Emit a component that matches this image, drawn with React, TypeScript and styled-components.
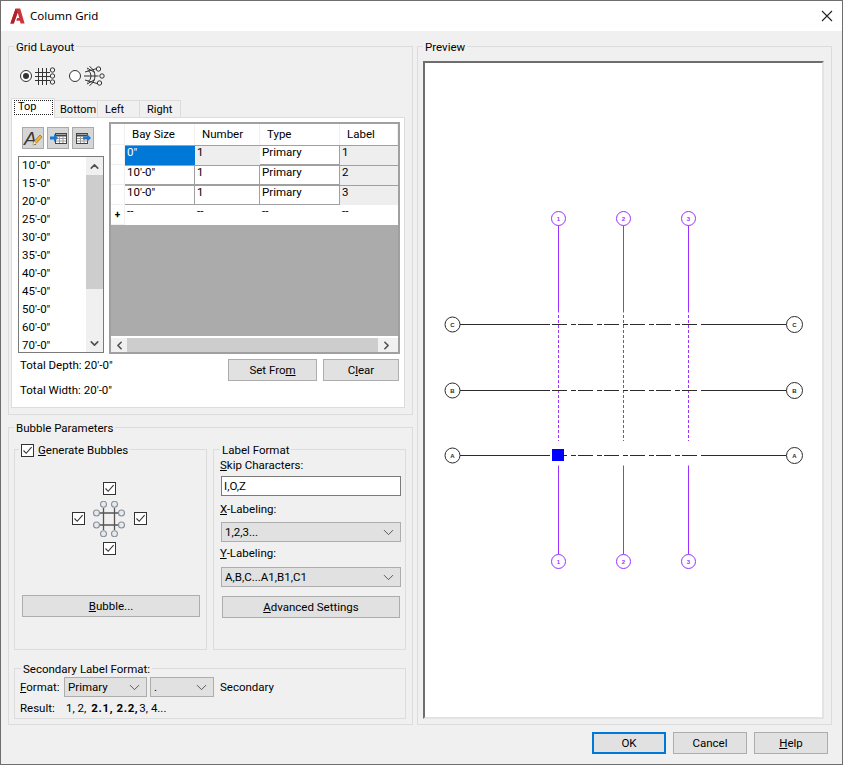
import * as React from 'react'
import styled, { createGlobalStyle } from 'styled-components'
import { ChevronDown, ChevronLeft, ChevronRight, ChevronUp } from 'lucide-react'

const GlobalStyle = createGlobalStyle`
  html, body {
    margin: 0;
    padding: 0;
    background: #f0f0f0;
  }
  * {
    box-sizing: border-box;
  }
`

const UI_FONT = `Roboto, "Liberation Sans", Arial, sans-serif`
const PURPLE = '#9b30ff'
const INK = '#2b2b2b'

const Window = styled.div`
  width: 843px;
  height: 765px;
  border: 1px solid #6e6e6e;
  background: #f0f0f0;
  color: #000;
  font-family: ${UI_FONT};
  font-size: 11.5px;
  line-height: 14px;
  overflow: hidden;
`

const TitleBar = styled.div`
  height: 30px;
  background: #fff;
  display: flex;
  align-items: center;
  padding: 0 9px 0 9px;
`

const TitleText = styled.span`
  font-family: "Noto Sans", sans-serif;
  font-size: 11.5px;
  margin-left: 5px;
  flex: 1;
`

const Body = styled.div`
  display: grid;
  grid-template-columns: 405px 415px;
  column-gap: 4px;
  padding: 15px 0 0 7px;
`

const Column = styled.div`
  display: flex;
  flex-direction: column;
  gap: 12px;
`

const Group = styled.div<{ $height: number }>`
  position: relative;
  height: ${p => p.$height}px;
  border: 1px solid #dcdcdc;
`

const Legend = styled.div<{ $left: number }>`
  position: absolute;
  top: -7px;
  left: ${p => p.$left}px;
  padding: 0 2px;
  background: #f0f0f0;
  display: flex;
  align-items: center;
  white-space: nowrap;
`

const RadioRow = styled.div`
  display: flex;
  align-items: center;
  height: 18px;
  margin: 20px 0 13px 11px;
`

const RadioDot = styled.span<{ $on?: boolean }>`
  width: 12px;
  height: 12px;
  border-radius: 50%;
  border: 1px solid #333;
  background: #fff;
  display: flex;
  align-items: center;
  justify-content: center;
  margin-right: 3px;

  &::after {
    content: '';
    width: 6px;
    height: 6px;
    border-radius: 50%;
    background: ${p => (p.$on ? '#333' : 'transparent')};
  }
`

const RadioOption = styled.div`
  display: flex;
  align-items: center;
  width: 49px;
`

const TabStrip = styled.div`
  display: flex;
  align-items: flex-end;
  height: 20px;
  margin-left: 2px;
  font-size: 11px;
  position: relative;
  z-index: 1;
`

const Tab = styled.div<{ $width: number; $indent?: number; $active?: boolean }>`
  width: ${p => p.$width}px;
  height: ${p => (p.$active ? 20 : 18)}px;
  border: 1px solid #dcdcdc;
  border-bottom: ${p => (p.$active ? 'none' : '1px solid #dcdcdc')};
  border-left: ${p => (p.$active ? '1px solid #dcdcdc' : 'none')};
  background: ${p => (p.$active ? '#fff' : '#f0f0f0')};
  padding: ${p => (p.$active ? '1px 0 0 2px' : `2px 0 0 ${p.$indent ?? 5}px`)};
`

const TabFocus = styled.span`
  display: block;
  width: 39px;
  height: 15px;
  padding-left: 3px;
  border: 1px dotted #222;
  line-height: 12px;
`

const TabPanel = styled.div`
  margin: -1px 0 0 2px;
  width: 394px;
  height: 291px;
  background: #fff;
  border: 1px solid #dcdcdc;
  padding: 4px 0 0 6px;
`

const PanelTop = styled.div`
  display: flex;
  gap: 5px;
`

const SideColumn = styled.div`
  width: 86px;
`

const Toolbar = styled.div`
  display: flex;
  gap: 3px;
  margin: 5px 0 7px 4px;
`

const ToolButton = styled.div`
  width: 22px;
  height: 22px;
  background: #d6d6d6;
  border: 1px solid #a9a9a9;
  display: flex;
  align-items: center;
  justify-content: center;
`

const ListBox = styled.div`
  height: 197px;
  width: 86px;
  border: 1px solid #7a7a7a;
  display: flex;
  background: #fff;
`

const ListItems = styled.div`
  flex: 1;
  padding: 0 0 0 3px;
`

const ListItem = styled.div`
  height: 18px;
  line-height: 16px;
`

const VScroll = styled.div`
  width: 17px;
  background: #f0f0f0;
  display: flex;
  flex-direction: column;
  align-items: center;
`

const ScrollEnd = styled.div`
  height: 18px;
  width: 100%;
  display: flex;
  align-items: center;
  justify-content: center;
  color: #505050;
  flex: none;
`

const VThumb = styled.div`
  width: 100%;
  height: 114px;
  background: #cdcdcd;
  flex: none;
`

const VSpacer = styled.div`
  flex: 1;
`

const GridBox = styled.div`
  width: 291px;
  height: 232px;
  border: 2px solid #a0a0a0;
  display: flex;
  flex-direction: column;
  background: #fff;
`

const GridRow = styled.div<{ $height: number }>`
  display: grid;
  grid-template-columns: 14px 70px 65px 80px 58px;
  height: ${p => p.$height}px;
  flex: none;
`

const HeaderCell = styled.div<{ $indent: number }>`
  border-right: 1px solid #f0f0f0;
  padding: 3px 0 0 ${p => p.$indent}px;
`

const RowHead = styled.div`
  border-right: 1px solid #f0f0f0;
  border-bottom: 1px solid #f0f0f0;
  display: flex;
  align-items: center;
  justify-content: center;
  font-size: 10px;
  font-weight: bold;
`

const Cell = styled.div<{ $selected?: boolean; $shade?: boolean; $box?: boolean; $top?: boolean }>`
  padding: 0 0 0 2px;
  line-height: 13px;
  border-top: ${p => (p.$top || p.$box ? '1px solid #a0a0a0' : 'none')};
  border-right: ${p => (p.$box ? '1px solid #a0a0a0' : 'none')};
  border-bottom: ${p => (p.$box ? '1px solid #a0a0a0' : 'none')};
  background: ${p => (p.$selected ? '#0078d7' : p.$shade ? '#eeeeee' : '#fff')};
  background-clip: padding-box;
  color: ${p => (p.$selected ? '#fff' : '#000')};
`

const GridGray = styled.div`
  height: 111px;
  background: #ababab;
  flex: none;
`

const HScroll = styled.div`
  margin-top: 2px;
  height: 15px;
  background: #f0f0f0;
  display: flex;
  align-items: center;
`

const HEnd = styled.div`
  width: 16px;
  display: flex;
  justify-content: center;
  color: #505050;
  flex: none;
`

const HThumb = styled.div`
  width: 251px;
  height: 100%;
  background: #cdcdcd;
`

const PanelBottom = styled.div`
  display: flex;
  justify-content: space-between;
  width: 381px;
  padding: 5px 0 0 2px;
`

const Totals = styled.div`
  display: flex;
  flex-direction: column;
  gap: 11px;
  margin-top: -1px;
`

const ButtonPair = styled.div`
  display: flex;
  gap: 6px;
`

const Button = styled.div<{ $width: number; $default?: boolean }>`
  width: ${p => p.$width}px;
  height: 22px;
  background: #e1e1e1;
  border: ${p => (p.$default ? '2px solid #0078d7' : '1px solid #adadad')};
  display: flex;
  align-items: center;
  justify-content: center;
  flex: none;
`

const BubbleRow = styled.div`
  display: flex;
  gap: 6px;
  margin: 21px 0 0 5px;
`

const SubGroup = styled.div<{ $width: number; $height: number }>`
  position: relative;
  width: ${p => p.$width}px;
  height: ${p => p.$height}px;
  border: 1px solid #dcdcdc;
`

const Check = styled.span`
  width: 13px;
  height: 13px;
  border: 1px solid #333;
  background: #fff;
  display: inline-flex;
  align-items: center;
  justify-content: center;
  flex: none;
`

const CheckCaption = styled.span`
  margin-left: 4px;
`

const Picker = styled.div`
  display: grid;
  grid-template-columns: 13px 48px 14px;
  grid-template-rows: 13px 1fr 13px;
  justify-items: center;
  align-items: center;
  width: 75px;
  height: 73px;
  margin: 32px 0 40px 57px;
`

const BubbleButton = styled(Button)`
  margin-left: 7px;
`

const LabelColumn = styled.div`
  padding: 8px 0 0 6px;
  display: flex;
  flex-direction: column;
`

const FieldLabel = styled.div<{ $top: number }>`
  margin-top: ${p => p.$top}px;
`

const TextInput = styled.div`
  width: 180px;
  height: 20px;
  margin: 4px 0 0 1px;
  background: #fff;
  border: 1px solid #7a7a7a;
  padding-left: 2px;
  line-height: 18px;
`

const Select = styled.div<{ $width: number; $top?: number }>`
  width: ${p => p.$width}px;
  height: 20px;
  margin-top: ${p => p.$top ?? 0}px;
  background: #e1e1e1;
  border: 1px solid #adadad;
  display: flex;
  align-items: center;
  justify-content: space-between;
  padding: 0 3px 0 3px;
  color: #000;
  flex: none;
`

const FieldSelect = styled(Select)`
  margin-left: 1px;
`

const AdvancedButton = styled(Button)`
  margin: 9px 0 0 2px;
`

const SecondaryBox = styled(SubGroup)`
  margin: 18px 0 0 5px;
  padding: 8px 0 0 5px;
`

const FormatRow = styled.div`
  display: flex;
  align-items: center;
  gap: 3px;
`

const FormatLabel = styled.span`
  width: 41px;
`

const SecondaryName = styled.span`
  margin-left: 3px;
`

const ResultRow = styled.div`
  display: flex;
  margin-top: 4px;
`

const ResultLabel = styled.span`
  width: 46px;
`

const ResultBold = styled.b`
  margin: 0 1px 0 5px;
  letter-spacing: 0.6px;
`

const PreviewGroup = styled(Group)`
  padding: 14px 7px 5px 5px;
`

const Canvas = styled.div`
  height: 100%;
  background: #fff;
  border-top: 2px solid #6e6e6e;
  border-left: 2px solid #6e6e6e;
  border-right: 2px solid #e3e3e3;
  border-bottom: 2px solid #e3e3e3;
`

const PreviewSvg = styled.svg`
  display: block;
  width: 100%;
  height: 100%;
`

const BubbleText = styled.text`
  font-family: "Liberation Sans", sans-serif;
  font-size: 6px;
  font-weight: bold;
  text-anchor: middle;
`

const Footer = styled.div`
  display: flex;
  justify-content: flex-end;
  gap: 7px;
  margin-top: 7px;
  padding-right: 14px;
`

const CheckBox = () => (
  <Check>
    <svg width="11" height="11" viewBox="0 0 11 11">
      <path d="M1.5 5.5 L4.2 8.3 L9.6 2.2" fill="none" stroke="#333" strokeWidth="1.1" />
    </svg>
  </Check>
)

const Logo = () => (
  <svg width="15" height="16" viewBox="0 0 15 16">
    <path d="M5.6 0.5 H10.2 L14.6 15.5 H10.6 L9.9 12.8 H6.2 L7.2 10 H9.2 L7.7 4.6 L3.8 15.5 H0.4 Z" fill="#c9343b" />
    <path d="M7.7 4.6 L3.8 15.5 H0.4 L5.6 0.5 Z" fill="#ad232b" />
  </svg>
)

const CloseIcon = () => (
  <svg width="12" height="12" viewBox="0 0 12 12">
    <path d="M1 1 L11 11 M11 1 L1 11" stroke="#222" strokeWidth="1.1" />
  </svg>
)

const RectGridIcon = () => (
  <svg width="22" height="20" viewBox="0 0 22 20">
    <g stroke="#333" strokeWidth="1" fill="none">
      <path d="M0 6.5 H15 M0 10.5 H15 M0 14.5 H15 M3.5 2 V19 M7.5 2 V19 M11.5 2 V19" />
      <circle cx="17.5" cy="4" r="2.2" />
      <circle cx="17.5" cy="10" r="2.2" />
      <circle cx="17.5" cy="16" r="2.2" />
    </g>
  </svg>
)

const RadialGridIcon = () => (
  <svg width="22" height="20" viewBox="0 0 22 20">
    <g stroke="#333" strokeWidth="1" fill="none">
      <path d="M3.5 3.9 A7 7 0 0 1 3.5 16.1 M5.5 0.5 A11 11 0 0 1 5.5 19.5" />
      <path d="M0 10 H14.5 M1 6 L13 2.5 M1 14 L13 17.5 M3 2 L11 6.5 M3 18 L11 13.5" />
      <circle cx="14.5" cy="3" r="2.2" />
      <circle cx="18" cy="10" r="2.2" />
      <circle cx="15.5" cy="17" r="2.2" />
    </g>
  </svg>
)

const FontToolIcon = () => (
  <svg width="20" height="20" viewBox="0 0 20 20">
    <text x="1" y="17" fontFamily="Liberation Sans" fontSize="19" fontStyle="italic" fill="#3a3a3a">A</text>
    <path d="M10 17 L11 13.5 L17 7 L19 9 L13 15.5 Z" fill="#f2b233" stroke="#7b5a16" strokeWidth="0.6" />
    <path d="M10 17 L11 13.5 L13 15.5 Z" fill="#fff2cf" />
  </svg>
)

const TableArrowIcon = ({ flip }: { flip?: boolean }) => (
  <svg width="20" height="16" viewBox="0 0 20 16">
    <rect x={flip ? 3.5 : 7.5} y="3.5" width="11" height="10" fill="#fff" stroke="#444" />
    <path d={flip ? 'M3.5 5.5 H14.5' : 'M7.5 5.5 H18.5'} stroke="#444" strokeWidth="2" />
    <path
      d={flip ? 'M4 8.5 H14 M4 11 H14 M7.5 6 V13 M11 6 V13' : 'M8 8.5 H18 M8 11 H18 M11.5 6 V13 M15 6 V13'}
      stroke="#9a9a9a"
    />
    <path
      d={flip ? 'M10 6.5 H14 V4 L18 8 L14 12 V9.5 H10 Z' : 'M2 6.5 H6 V4 L10 8 L6 12 V9.5 H2 Z'}
      fill="#1a78d0"
    />
  </svg>
)

const BubbleDiagram = () => {
  const spots = [
    [12.5, 3.3], [23.5, 3.3], [5.5, 12], [30.5, 12], [5.5, 24], [30.5, 24], [12.5, 32.7], [23.5, 32.7],
  ]

  return (
    <svg width="36" height="36" viewBox="0 0 36 36">
      <path d="M7 12 H29 M7 24 H29 M12.5 7 V29 M23.5 7 V29" stroke="#555" strokeWidth="1.3" fill="none" />
      {spots.map(([cx, cy]) => (
        <circle key={`${cx}-${cy}`} cx={cx} cy={cy} r="3" fill="#e6e9ee" stroke="#8a9099" strokeWidth="1.1" />
      ))}
    </svg>
  )
}

const SelectArrow = () => <ChevronDown size={17} strokeWidth={1.1} color="#333" />

const VerticalAxis = ({ x, label }: { x: number; label: string }) => (
  <g>
    <circle cx={x} cy={218.5} r={7} fill="#fff" stroke={PURPLE} />
    <BubbleText x={x} y={220.5} fill={PURPLE}>{label}</BubbleText>
    <path d={`M${x} 225.5 V312.5 M${x} 465.5 V554.5`} stroke={PURPLE} strokeWidth="1" />
    <path d={`M${x} 315 V441`} stroke={PURPLE} strokeWidth="1" strokeDasharray="3 2" />
    <circle cx={x} cy={561.5} r={7} fill="#fff" stroke={PURPLE} />
    <BubbleText x={x} y={563.5} fill={PURPLE}>{label}</BubbleText>
  </g>
)

const HorizontalAxis = ({ y, label }: { y: number; label: string }) => (
  <g>
    <circle cx={452.5} cy={y} r={7.5} fill="#fff" stroke={INK} />
    <BubbleText x={452.5} y={y + 2} fill={INK}>{label}</BubbleText>
    <path d={`M460 ${y} H550 M701 ${y} H786.5`} stroke={INK} />
    <path d={`M552 ${y} H697.5`} stroke={INK} strokeDasharray="15 4 5 2" />
    <circle cx={794.5} cy={y} r={8} fill="#fff" stroke={INK} />
    <BubbleText x={794.5} y={y + 2.2} fill={INK}>{label}</BubbleText>
  </g>
)

const LIST_ITEMS = ['10', '15', '20', '25', '30', '35', '40', '45', '50', '60', '70']

const ROWS = [
  { size: '0"', label: '1' },
  { size: `10'-0"`, label: '2' },
  { size: `10'-0"`, label: '3' },
]

export default function App() {
  return (
    <Window>
      <GlobalStyle />
      <TitleBar>
        <Logo />
        <TitleText>Column Grid</TitleText>
        <CloseIcon />
      </TitleBar>

      <Body>
        <Column>
          <Group $height={369}>
            <Legend $left={5}>Grid Layout</Legend>
            <RadioRow>
              <RadioOption>
                <RadioDot $on />
                <RectGridIcon />
              </RadioOption>
              <RadioOption>
                <RadioDot />
                <RadialGridIcon />
              </RadioOption>
            </RadioRow>

            <TabStrip>
              <Tab $width={44} $active><TabFocus>Top</TabFocus></Tab>
              <Tab $width={43}>Bottom</Tab>
              <Tab $width={42} $indent={7}>Left</Tab>
              <Tab $width={41} $indent={7}>Right</Tab>
            </TabStrip>

            <TabPanel>
              <PanelTop>
                <SideColumn>
                  <Toolbar>
                    <ToolButton><FontToolIcon /></ToolButton>
                    <ToolButton><TableArrowIcon /></ToolButton>
                    <ToolButton><TableArrowIcon flip /></ToolButton>
                  </Toolbar>
                  <ListBox>
                    <ListItems>
                      {LIST_ITEMS.map(n => (
                        <ListItem key={n}>{n}'-0"</ListItem>
                      ))}
                    </ListItems>
                    <VScroll>
                      <ScrollEnd><ChevronUp size={13} strokeWidth={3} /></ScrollEnd>
                      <VThumb />
                      <VSpacer />
                      <ScrollEnd><ChevronDown size={13} strokeWidth={3} /></ScrollEnd>
                    </VScroll>
                  </ListBox>
                </SideColumn>

                <GridBox>
                  <GridRow $height={21}>
                    <RowHead />
                    <HeaderCell $indent={7}>Bay Size</HeaderCell>
                    <HeaderCell $indent={7}>Number</HeaderCell>
                    <HeaderCell $indent={7}>Type</HeaderCell>
                    <HeaderCell $indent={7}>Label</HeaderCell>
                  </GridRow>
                  {ROWS.map((row, i) => (
                    <GridRow $height={20} key={row.label}>
                      <RowHead />
                      <Cell $selected={i === 0} $box={i > 0} $top>{row.size}</Cell>
                      <Cell $shade={i === 0} $box={i > 0} $top>1</Cell>
                      <Cell $box>Primary</Cell>
                      <Cell $shade $top>{row.label}</Cell>
                    </GridRow>
                  ))}
                  <GridRow $height={20}>
                    <RowHead>+</RowHead>
                    <Cell>--</Cell>
                    <Cell>--</Cell>
                    <Cell>--</Cell>
                    <Cell>--</Cell>
                  </GridRow>
                  <GridGray />
                  <HScroll>
                    <HEnd><ChevronLeft size={13} strokeWidth={3} /></HEnd>
                    <HThumb />
                    <HEnd><ChevronRight size={13} strokeWidth={3} /></HEnd>
                  </HScroll>
                </GridBox>
              </PanelTop>

              <PanelBottom>
                <Totals>
                  <span>Total Depth: 20'-0"</span>
                  <span>Total Width: 20'-0"</span>
                </Totals>
                <ButtonPair>
                  <Button $width={89}><span>Set Fro<u>m</u></span></Button>
                  <Button $width={76}><span>C<u>l</u>ear</span></Button>
                </ButtonPair>
              </PanelBottom>
            </TabPanel>
          </Group>

          <Group $height={298}>
            <Legend $left={5}>Bubble Parameters</Legend>
            <BubbleRow>
              <SubGroup $width={193} $height={201}>
                <Legend $left={4}>
                  <CheckBox />
                  <CheckCaption><u>G</u>enerate Bubbles</CheckCaption>
                </Legend>
                <Picker>
                  <span />
                  <CheckBox />
                  <span />
                  <CheckBox />
                  <BubbleDiagram />
                  <CheckBox />
                  <span />
                  <CheckBox />
                  <span />
                </Picker>
                <BubbleButton $width={178}><span><u>B</u>ubble...</span></BubbleButton>
              </SubGroup>

              <SubGroup $width={193} $height={201}>
                <Legend $left={6}>Label Format</Legend>
                <LabelColumn>
                  <FieldLabel $top={0}><u>S</u>kip Characters:</FieldLabel>
                  <TextInput>I,O,Z</TextInput>
                  <FieldLabel $top={6}><u>X</u>-Labeling:</FieldLabel>
                  <FieldSelect $width={180} $top={6}>1,2,3...<SelectArrow /></FieldSelect>
                  <FieldLabel $top={4}><u>Y</u>-Labeling:</FieldLabel>
                  <FieldSelect $width={180} $top={7}>A,B,C...A1,B1,C1<SelectArrow /></FieldSelect>
                  <AdvancedButton $width={178}><span><u>A</u>dvanced Settings</span></AdvancedButton>
                </LabelColumn>
              </SubGroup>
            </BubbleRow>

            <SecondaryBox $width={392} $height={51}>
              <Legend $left={6}>Secondary Label Format:</Legend>
              <FormatRow>
                <FormatLabel><u>F</u>ormat:</FormatLabel>
                <Select $width={83}>Primary<SelectArrow /></Select>
                <Select $width={64}>.<SelectArrow /></Select>
                <SecondaryName>Secondary</SecondaryName>
              </FormatRow>
              <ResultRow>
                <ResultLabel>Result:</ResultLabel>
                <span>1, 2,</span>
                <ResultBold>2.1, 2.2,</ResultBold>
                <span>3, 4...</span>
              </ResultRow>
            </SecondaryBox>
          </Group>
        </Column>

        <PreviewGroup $height={679}>
          <Legend $left={5}>Preview</Legend>
          <Canvas>
            <PreviewSvg viewBox="425 63 397 654">
              <VerticalAxis x={558.5} label="1" />
              <VerticalAxis x={623.5} label="2" />
              <VerticalAxis x={688.5} label="3" />
              <HorizontalAxis y={324.5} label="C" />
              <HorizontalAxis y={390.5} label="B" />
              <HorizontalAxis y={455.5} label="A" />
              <rect x="552" y="449" width="12" height="12" fill="#0000ff" />
            </PreviewSvg>
          </Canvas>
        </PreviewGroup>
      </Body>

      <Footer>
        <Button $width={74} $default>OK</Button>
        <Button $width={74}>Cancel</Button>
        <Button $width={74}><span><u>H</u>elp</span></Button>
      </Footer>
    </Window>
  )
}
